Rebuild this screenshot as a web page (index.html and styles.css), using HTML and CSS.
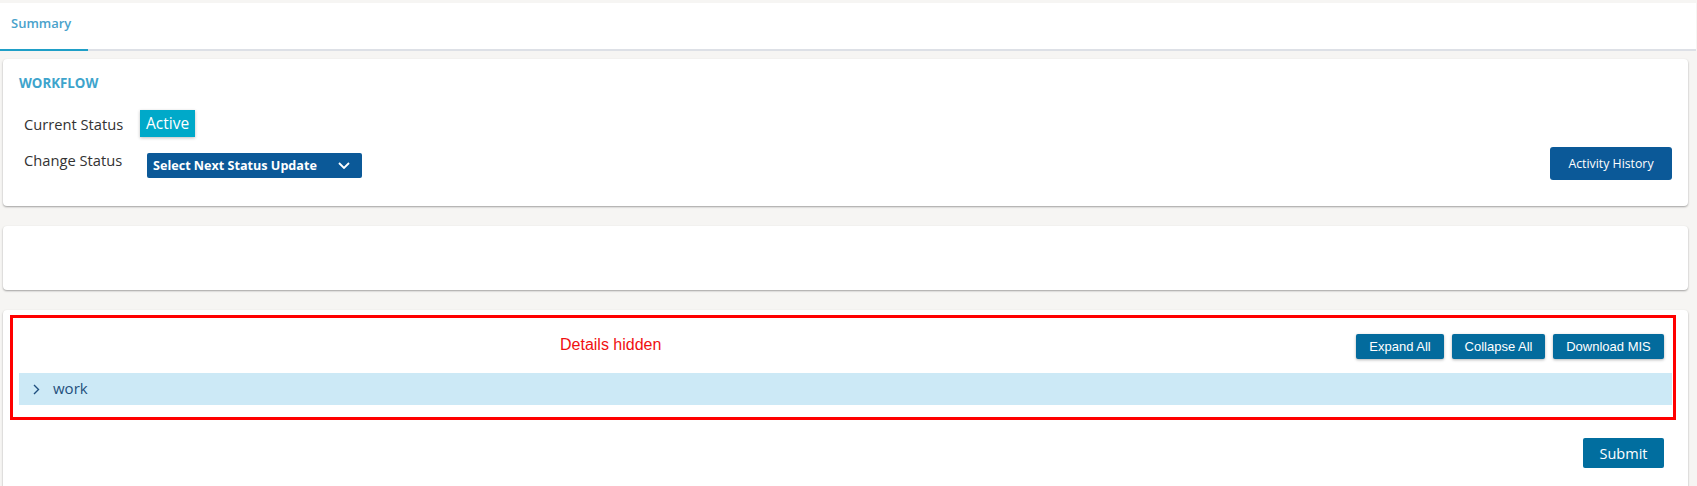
FILE: index.html
```html
<!DOCTYPE html>
<html>
<head>
<meta charset="utf-8">
<link rel="stylesheet" href="styles.css">
</head>
<body>
<div class="page">
  <nav class="tabs">
    <div class="tab active">Summary</div>
  </nav>
  <main class="content">
    <section class="card card-workflow">
      <div class="wf-title">WORKFLOW</div>
      <div class="wf-row wf-row-current">
        <span class="wf-label">Current Status</span>
        <span class="badge">Active</span>
      </div>
      <div class="wf-row wf-row-change">
        <span class="wf-label wf-label-change">Change Status</span>
        <button class="dropdown">Select Next Status Update
          <svg class="dd-chev" width="12" height="7" viewBox="0 0 12 7"><path d="M1 1l5 5 5-5" fill="none" stroke="#fff" stroke-width="1.8"/></svg>
        </button>
        <button class="btn-history">Activity History</button>
      </div>
    </section>
    <section class="card card-empty"></section>
    <section class="card card-details">
      <div class="redbox">
        <div class="toolbar">
          <span class="hidden-note">Details hidden</span>
          <div class="tool-buttons">
            <button class="btn-tool btn-expand">Expand All</button>
            <button class="btn-tool btn-collapse">Collapse All</button>
            <button class="btn-tool btn-download">Download MIS</button>
          </div>
        </div>
        <div class="tree-row">
          <svg class="row-chev" width="7" height="11" viewBox="0 0 7 11"><path d="M1 1l4.5 4.5L1 10" fill="none" stroke="#1f4f7f" stroke-width="1.4"/></svg>
          <span class="row-text">work</span>
        </div>
      </div>
      <div class="submit-row">
        <button class="btn-submit">Submit</button>
      </div>
    </section>
  </main>
</div>
</body>
</html>
```
FILE: styles.css
```css
* { box-sizing: border-box; }
html, body { margin: 0; padding: 0; }
body {
  background: #f6f5f3;
  font-family: "Open Sans", "Noto Sans", sans-serif;
  color: #333;
  height: 486px;
  overflow: hidden;
}
.page { padding-top: 3px; }
.tabs {
  background: #fff;
  height: 48px;
  margin-right: 1px;
  border-bottom: 2px solid #dde0e6;
  display: flex;
}
.tab {
  width: 88px;
  height: 48px;
  padding: 11px 0 0 11px;
  font-size: 13px;
  font-weight: 600;
  line-height: 18px;
  color: #4aa2cb;
  border-bottom: 2px solid #1f9fc7;
  margin-bottom: -2px;
}
.content {
  padding: 8px 9px 0 3px;
  display: flex;
  flex-direction: column;
  gap: 20px;
}
.card {
  background: #fff;
  border-radius: 4px;
  box-shadow: 0 1px 2px rgba(0,0,0,0.35);
}
.card-workflow {
  height: 147px;
  padding: 16px 16px 0 16px;
}
.wf-title {
  font-size: 13.3px;
  font-weight: 700;
  line-height: 17px;
  color: #3ea4cc;
  padding-left: 0;
}
.wf-row { display: flex; align-items: center; }
.wf-row-current { margin-top: 18px; height: 27px; }
.wf-label {
  width: 121px;
  padding-left: 5px;
  font-size: 14.7px;
  color: #333;
}
.badge {
  background: #00a9c9;
  color: #fff;
  font-size: 15.5px;
  height: 27px;
  line-height: 27px;
  padding: 0 6px;
  box-shadow: 0 1px 3px rgba(0,0,0,0.25);
}
.wf-row-change { margin-top: 10px; height: 33px; }
.wf-label-change { margin-top: -7px; }
.dropdown {
  margin-left: 7px;
  margin-top: 3px;
  width: 215px;
  height: 25px;
  border: 0;
  border-radius: 2px;
  background: #0b5998;
  color: #fff;
  font-family: "Open Sans", "Noto Sans", sans-serif;
  font-weight: 700;
  font-size: 12.6px;
  display: flex;
  align-items: center;
  padding: 0 0 0 6px;
  white-space: nowrap;
}
.dd-chev { margin-left: auto; margin-right: 12px; }
.btn-history {
  margin-left: auto;
  width: 122px;
  height: 33px;
  border: 0;
  border-radius: 3px;
  background: #0b5998;
  color: #fff;
  font-family: "Open Sans", "Noto Sans", sans-serif;
  font-size: 12.3px;
  padding: 0;
}
.card-empty { height: 64px; }
.card-details {
  height: 200px;
  padding: 5px 12px 0 7px;
  border-radius: 4px 4px 0 0;
}
.redbox {
  border: 3px solid #ff0000;
  height: 105px;
  padding: 16px 1px 0 6px;
}
.toolbar {
  display: flex;
  align-items: center;
  height: 25px;
}
.hidden-note {
  font-family: "Liberation Sans", Arial, sans-serif;
  font-size: 16px;
  color: #f01010;
  margin-left: 541px;
  margin-top: -3px;
}
.tool-buttons {
  margin-left: auto;
  margin-right: 8px;
  display: flex;
  gap: 8px;
}
.btn-tool {
  height: 25px;
  border: 0;
  border-radius: 2px;
  background: #036b9d;
  color: #fff;
  font-family: "Liberation Sans", Arial, sans-serif;
  font-size: 13px;
  padding: 0;
  white-space: nowrap;
  box-shadow: 0 1px 3px rgba(0,0,0,0.3);
}
.btn-expand { width: 88px; }
.btn-collapse { width: 93px; }
.btn-download { width: 111px; }
.tree-row {
  margin-top: 14px;
  height: 32px;
  background: #cce9f6;
  display: flex;
  align-items: center;
  padding-left: 14px;
}
.row-text {
  margin-left: 13px;
  font-size: 15px;
  color: #24507c;
  margin-top: -2px;
}
.submit-row {
  display: flex;
  justify-content: flex-end;
  margin-top: 18px;
  padding-right: 12px;
}
.btn-submit {
  width: 81px;
  height: 30px;
  border: 0;
  border-radius: 2px;
  background: #016e9f;
  color: #fff;
  font-family: "Open Sans", "Noto Sans", sans-serif;
  font-size: 14.5px;
  padding: 0;
}
```
